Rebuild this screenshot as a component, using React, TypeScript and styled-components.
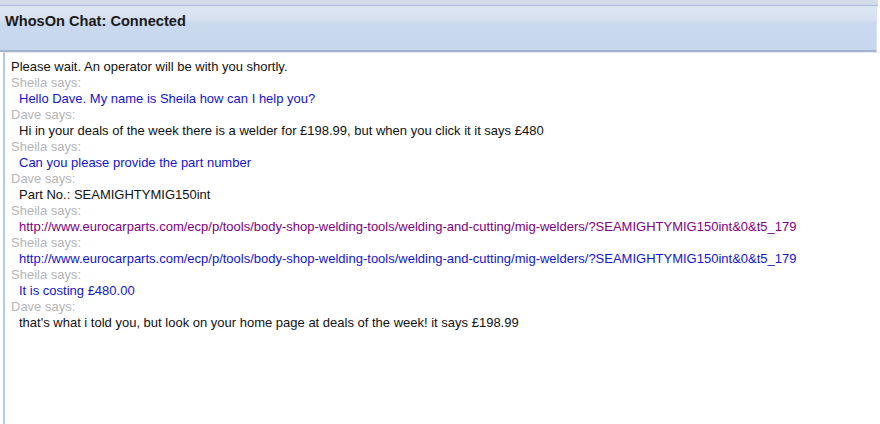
import React from "react";
import styled, { createGlobalStyle } from "styled-components";

const Global = createGlobalStyle`
  html, body { margin: 0; padding: 0; background: #ffffff; }
  body { width: 880px; height: 424px; overflow: hidden; font-family: Arial, "Liberation Sans", sans-serif; }
`;

const Frame = styled.div`
  width: 880px;
  height: 424px;
  display: flex;
  flex-direction: column;
  background: #ffffff;
`;

const TopStrip = styled.div`
  height: 5px;
  background: #d4dcea;
  border-bottom: 1px solid #a9badb;
  margin-right: 2px;
`;

const Header = styled.div`
  height: 46px;
  display: flex;
  align-items: flex-start;
  padding: 6px 0 0 5px;
  box-sizing: border-box;
  margin-right: 3px;
  background: linear-gradient(to bottom, #dee6f3 0px, #d5e0f0 14px, #c9d9ee 17px, #c6d7ee 46px);
  border-bottom: 2px solid #a3b4cc;
  border-right: 1px solid #d8e2f0;
`;

const Title = styled.div`
  font-family: Arial, "Liberation Sans", sans-serif;
  font-weight: bold;
  font-size: 14.6px;
  color: #1a1a1a;
  line-height: 18px;
`;

const Body = styled.div`
  flex: 1;
  margin-left: 3px;
  border-left: 2px solid #b7c7e6;
  border-top: 1px solid #e4e8ef;
  padding: 6px 0 0 6px;
  display: flex;
  flex-direction: column;
`;

const Line = styled.div<{ $tone?: string; $indent?: boolean }>`
  font-family: Arial, "Liberation Sans", sans-serif;
  font-size: 13px;
  line-height: 16px;
  height: 16px;
  white-space: nowrap;
  color: ${(p) => p.$tone || "#111111"};
  padding-left: ${(p) => (p.$indent ? "8px" : "0")};
`;

const GREY = "#b4b4b4";
const BLUE = "#1515c8";
const PURPLE = "#800080";
const BLACK = "#111111";

type Msg = { who: string; text: string; color: string };

const messages: Msg[] = [
  { who: "Sheila", text: "Hello Dave. My name is Sheila how can I help you?", color: BLUE },
  { who: "Dave", text: "Hi in your deals of the week there is a welder for £198.99, but when you click it it says £480", color: BLACK },
  { who: "Sheila", text: "Can you please provide the part number", color: BLUE },
  { who: "Dave", text: "Part No.: SEAMIGHTYMIG150int", color: BLACK },
  { who: "Sheila", text: "http://www.eurocarparts.com/ecp/p/tools/body-shop-welding-tools/welding-and-cutting/mig-welders/?SEAMIGHTYMIG150int&0&t5_179", color: PURPLE },
  { who: "Sheila", text: "http://www.eurocarparts.com/ecp/p/tools/body-shop-welding-tools/welding-and-cutting/mig-welders/?SEAMIGHTYMIG150int&0&t5_179", color: BLUE },
  { who: "Sheila", text: "It is costing £480.00", color: BLUE },
  { who: "Dave", text: "that's what i told you, but look on your home page at deals of the week! it says £198.99", color: BLACK },
];

export default function App() {
  return (
    <Frame>
      <Global />
      <TopStrip />
      <Header>
        <Title>WhosOn Chat: Connected</Title>
      </Header>
      <Body>
        <Line>Please wait. An operator will be with you shortly.</Line>
        {messages.map((m, i) => (
          <React.Fragment key={i}>
            <Line $tone={GREY}>{m.who} says:</Line>
            <Line $tone={m.color} $indent>
              {m.text}
            </Line>
          </React.Fragment>
        ))}
      </Body>
    </Frame>
  );
}
